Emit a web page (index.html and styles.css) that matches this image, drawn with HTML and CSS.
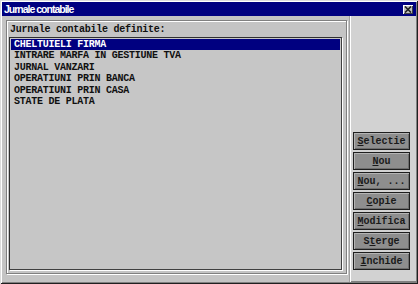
FILE: index.html
```html
<!doctype html>
<html lang="ro">
<head>
    <meta charset="UTF-8">
    <title>Jurnale contabile</title>
    <link rel="stylesheet" href="styles.css">
</head>
<body>
    <div class="window">
        <!-- Title bar -->
        <div class="titlebar">
            <span class="title">Jurnale contabile</span>
            <span class="close">
                <svg width="8" height="7" viewBox="0 0 8 7">
                    <path d="M1 0.5 L7 6.5 M7 0.5 L1 6.5" stroke="#202020" stroke-width="1.6" fill="none"/>
                </svg>
            </span>
        </div>

        <div class="content">
            <!-- Journal list -->
            <div class="main">
                <div class="group">
                    <div class="label">Jurnale contabile definite:</div>
                    <ul class="list">
                        <li class="selected">CHELTUIELI FIRMA</li>
                        <li>INTRARE MARFA IN GESTIUNE TVA</li>
                        <li>JURNAL VANZARI</li>
                        <li>OPERATIUNI PRIN BANCA</li>
                        <li>OPERATIUNI PRIN CASA</li>
                        <li>STATE DE PLATA</li>
                    </ul>
                </div>
            </div>

            <!-- Buttons -->
            <div class="side">
                <button><u>S</u>electie</button>
                <button><u>N</u>ou</button>
                <button><u>N</u>ou, ...</button>
                <button><u>C</u>opie</button>
                <button><u>M</u>odifica</button>
                <button>S<u>t</u>erge</button>
                <button><u>I</u>nchide</button>
            </div>
        </div>
    </div>
</body>
</html>
```

FILE: styles.css
```css
/* General */
body {
    margin: 0;
    background-color: #c0c0c0;
    font-family: 'Liberation Mono', 'DejaVu Sans Mono', monospace;
    color: #101010;
}

.window {
    width: 418px;
    height: 284px;
    box-sizing: border-box;
    padding: 2px;
    background-color: #c4c4c4;
    box-shadow: inset 1px 1px #dcdcdc, inset -1px -1px #202020,
                inset 2px 2px #ffffff, inset -2px -2px #808080;
    display: flex;
    flex-direction: column;
}

/* Title bar */
.titlebar {
    height: 14px;
    background-color: #000080;
    display: flex;
    align-items: center;
    justify-content: space-between;
    padding: 0 3px 0 2px;
}

.title {
    font-family: 'Liberation Sans', Arial, sans-serif;
    font-weight: bold;
    font-size: 10.5px;
    letter-spacing: -1px;
    color: #ffffff;
}

.close {
    width: 10px;
    height: 9px;
    background-color: #c0c0c0;
    box-shadow: inset 1px 1px #ffffff, inset -1px -1px #404040;
    display: flex;
    align-items: center;
    justify-content: center;
}

/* Content */
.content {
    flex: 1;
    display: flex;
}

.main {
    width: 347px;
    box-sizing: border-box;
    padding: 4px 2px 8px 4px;
}

.group {
    height: 100%;
    box-sizing: border-box;
    border: 1px solid #808080;
    box-shadow: inset 1px 1px #ffffff, 1px 1px #ffffff;
    padding: 2px 4px 3px 2px;
    display: flex;
    flex-direction: column;
}

.label {
    height: 14px;
    line-height: 14px;
    font-size: 10px;
    letter-spacing: -0.25px;
    font-weight: bold;
    padding-left: 1px;
}

.list {
    flex: 1;
    margin: 0;
    padding: 1px;
    list-style: none;
    background-color: #c6c6c6;
    border-top: 1px solid #303030;
    border-left: 1px solid #303030;
    border-right: 1px solid #404040;
    border-bottom: 1px solid #404040;
    box-shadow: 1px 1px #ffffff;
}

.list li {
    height: 11.4px;
    line-height: 11.4px;
    font-size: 10px;
    letter-spacing: -0.25px;
    font-weight: bold;
    padding-left: 3px;
    white-space: nowrap;
}

.list li.selected {
    background-color: #000080;
    color: #ffffff;
}

/* Side buttons */
.side {
    flex: 1;
    background-color: #d2d2d2;
    border-left: 1px solid #a0a0a0;
    box-shadow: inset 1px 0 #ffffff, inset 0 -1px #808080;
    padding: 116px 0 0 3px;
    display: flex;
    flex-direction: column;
    gap: 2px;
}

button {
    width: 57px;
    height: 18px;
    margin: 0;
    padding: 0;
    font-family: 'Liberation Mono', 'DejaVu Sans Mono', monospace;
    font-size: 10px;
    font-weight: bold;
    color: #1a1a1a;
    background-color: #8e8e8e;
    border: 1px solid #1e1e1e;
    box-shadow: inset 1px 1px #b4b4b4, inset -1px -1px #6c6c6c;
    cursor: pointer;
}
```
